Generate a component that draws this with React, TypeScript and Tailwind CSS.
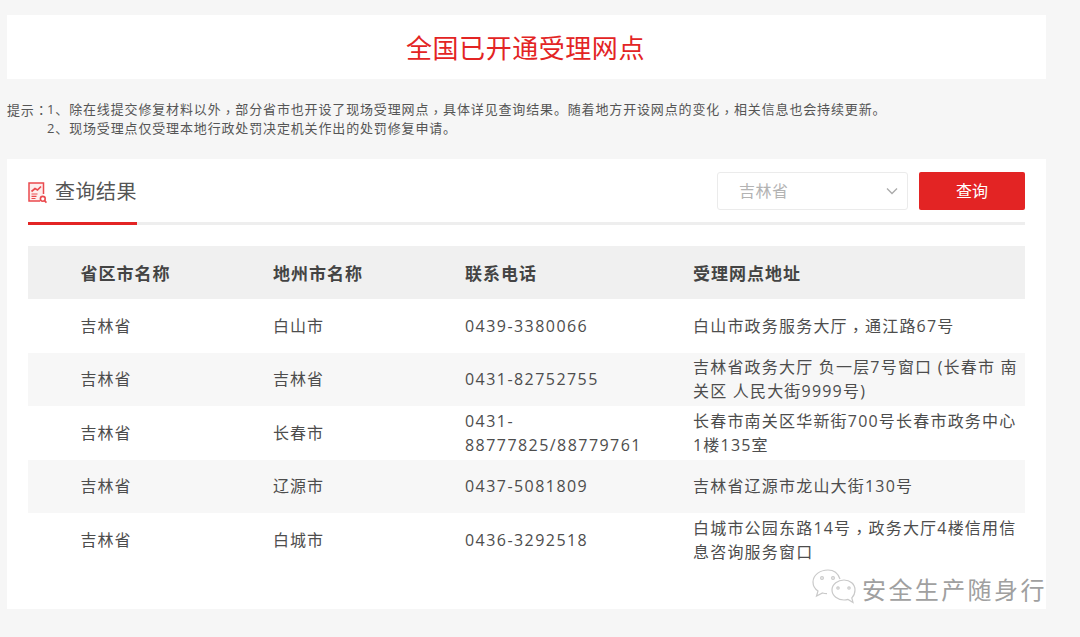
import React from "react";

const rows = [
  ["吉林省", "白山市", "0439-3380066", "白山市政务服务大厅，通江路67号"],
  ["吉林省", "吉林省", "0431-82752755", "吉林省政务大厅 负一层7号窗口 (长春市 南关区 人民大街9999号)"],
  ["吉林省", "长春市", "0431-88777825/88779761", "长春市南关区华新街700号长春市政务中心1楼135室"],
  ["吉林省", "辽源市", "0437-5081809", "吉林省辽源市龙山大街130号"],
  ["吉林省", "白城市", "0436-3292518", "白城市公园东路14号，政务大厅4楼信用信\n息咨询服务窗口"],
];

function Centered({ text }: { text: string }) {
  return (
    <>
      {text.split(/([，：\n])/).map((part, i) =>
        part === "，" ? (
          <span key={i} className="inline-block h-[10px] translate-y-[0.24em] overflow-visible align-baseline font-['Noto_Sans_CJK_TC'] leading-[10px]">{part}</span>
        ) : part === "：" ? (
          <span key={i} className="font-['Noto_Sans_CJK_TC']">{part}</span>
        ) : part === "\n" ? (
          <br key={i} />
        ) : (
          <React.Fragment key={i}>{part}</React.Fragment>
        )
      )}
    </>
  );
}

function ReportIcon() {
  return (
    <svg width="19" height="22" viewBox="0 0 19 22" fill="none" stroke="#ea4a4e" strokeWidth="1.5">
      <path d="M12 19H1V1h14.500v11" fill="#fdeeee" />
      <path d="M3.500 9.500l3.500-3 2.500 1.500 3.500-3.500" strokeWidth="1.700" />
      <path d="M3.500 12h6M3.500 14.300h5M3.500 16.500h4" strokeWidth="1.200" />
      <circle cx="14.800" cy="16.800" r="2.400" fill="#fff" strokeWidth="1.600" />
      <path d="M16.500 18.600l2 2" strokeWidth="1.700" />
    </svg>
  );
}

function WeChatMark() {
  return (
    <svg width="44" height="38" viewBox="0 0 44 38" fill="none" stroke="#c9c9c9" strokeWidth="1.2">
      <path d="M28 10C26 4 21 1 16 1 8 1 1 6 1 13c0 4 2 7 5 9l-1.500 5 6-3c1.500.4 3 .6 4.500.6" fill="#fff" />
      <path d="M43 21c0-6-5-10-11-10s-12 4-12 10 6 10 12 10c1.500 0 3-.3 4-.6l5 3-1.200-4.500c2-2 3.200-4.500 3.200-7.900z" fill="#fff" />
      <circle cx="10" cy="9" r="1.400" />
      <circle cx="21" cy="9" r="1.400" />
      <circle cx="26" cy="19" r="1.200" />
      <circle cx="37" cy="19" r="1.200" />
    </svg>
  );
}

export default function App() {
  return (
    <div className="relative h-[637px] w-[1080px] overflow-hidden bg-[#f6f6f6] pl-[7px] pt-[15px] font-['Open_Sans','Noto_Sans_CJK_SC',sans-serif]">
      <div className="flex h-[64px] w-[1039px] items-center justify-center bg-white pr-[2px] pt-[2px] text-[26px] tracking-[0.55px] text-[#e32424]">
        全国已开通受理网点
      </div>

      <div className="mt-[21px] flex h-[38px] text-[13px] leading-[19px] tracking-[0.85px] text-[#555555]">
        <span className="w-[40px] shrink-0 whitespace-nowrap"><Centered text="提示：" /></span>
        <div className="whitespace-nowrap">
          <p><Centered text="1、除在线提交修复材料以外，部分省市也开设了现场受理网点，具体详见查询结果。随着地方开设网点的变化，相关信息也会持续更新。" /></p>
          <p>2、现场受理点仅受理本地行政处罚决定机关作出的处罚修复申请。</p>
        </div>
      </div>

      <div className="mt-[21px] h-[450px] w-[1039px] bg-white px-[21px] pt-[13px]">
        <div className="flex h-[53px] justify-between border-b-[3px] border-[#eeeeee]">
          <div className="-mb-[3px] flex h-[53px] w-[109px] items-start gap-[8px] border-b-[3px] border-[#e32424] pt-[5px]">
            <span className="mt-[5px]"><ReportIcon /></span>
            <span className="whitespace-nowrap text-[20px] leading-[30px] tracking-[0.5px] text-[#555555]">查询结果</span>
          </div>
          <div className="flex gap-[11px]">
            <div className="flex h-[38px] w-[191px] items-center justify-between rounded-[3px] border border-[#ebebeb] pl-[21px] pr-[9px] text-[16px] tracking-[0.5px] text-[#b3b3b3]">
              吉林省
              <svg width="12" height="12" viewBox="0 0 12 12" fill="none" stroke="#aaaaaa" strokeWidth="1.300">
                <path d="M1 3.500l5 5 5-5" />
              </svg>
            </div>
            <div className="flex h-[38px] w-[106px] items-center justify-center rounded-[2px] bg-[#e32424] text-[16px] text-white">
              查询
            </div>
          </div>
        </div>

        <div className="mt-[21px] text-[16px] tracking-[1.45px] text-[#4d4d4d]">
          <div className="grid h-[53.4px] grid-cols-[245px_192px_228px_332px] items-center bg-[#f0f0f0] pt-[2px] text-[17px] font-bold tracking-[1px] text-[#444444]">
            <span className="pl-[52.5px]">省区市名称</span>
            <span>地州市名称</span>
            <span>联系电话</span>
            <span>受理网点地址</span>
          </div>
          {rows.map((r, i) => (
            <div
              key={r[1]}
              className={`grid h-[53.4px] grid-cols-[245px_192px_228px_332px] items-center leading-[24px] ${i % 2 === 1 ? "bg-[#f7f7f7]" : "bg-white"}`}
            >
              <span className="pl-[52.5px] tracking-[1px]">{r[0]}</span>
              <span className="tracking-[1px]">{r[1]}</span>
              <span className="w-[190px] break-words">{r[2]}</span>
              <span className="pr-[4px] tracking-[1.2px]"><Centered text={r[3]} /></span>
            </div>
          ))}
        </div>
      </div>

      <div className="absolute left-[812px] top-[570px] flex items-center gap-[6px] whitespace-nowrap text-[24px] text-[#a0a0a0] [text-shadow:-1px_-1px_0_rgba(255,255,255,0.9)]">
        <span className="-mt-[2px]"><WeChatMark /></span>
        <span className="mt-[2px] tracking-[2.4px]">安全生产随身行</span>
      </div>
    </div>
  );
}
